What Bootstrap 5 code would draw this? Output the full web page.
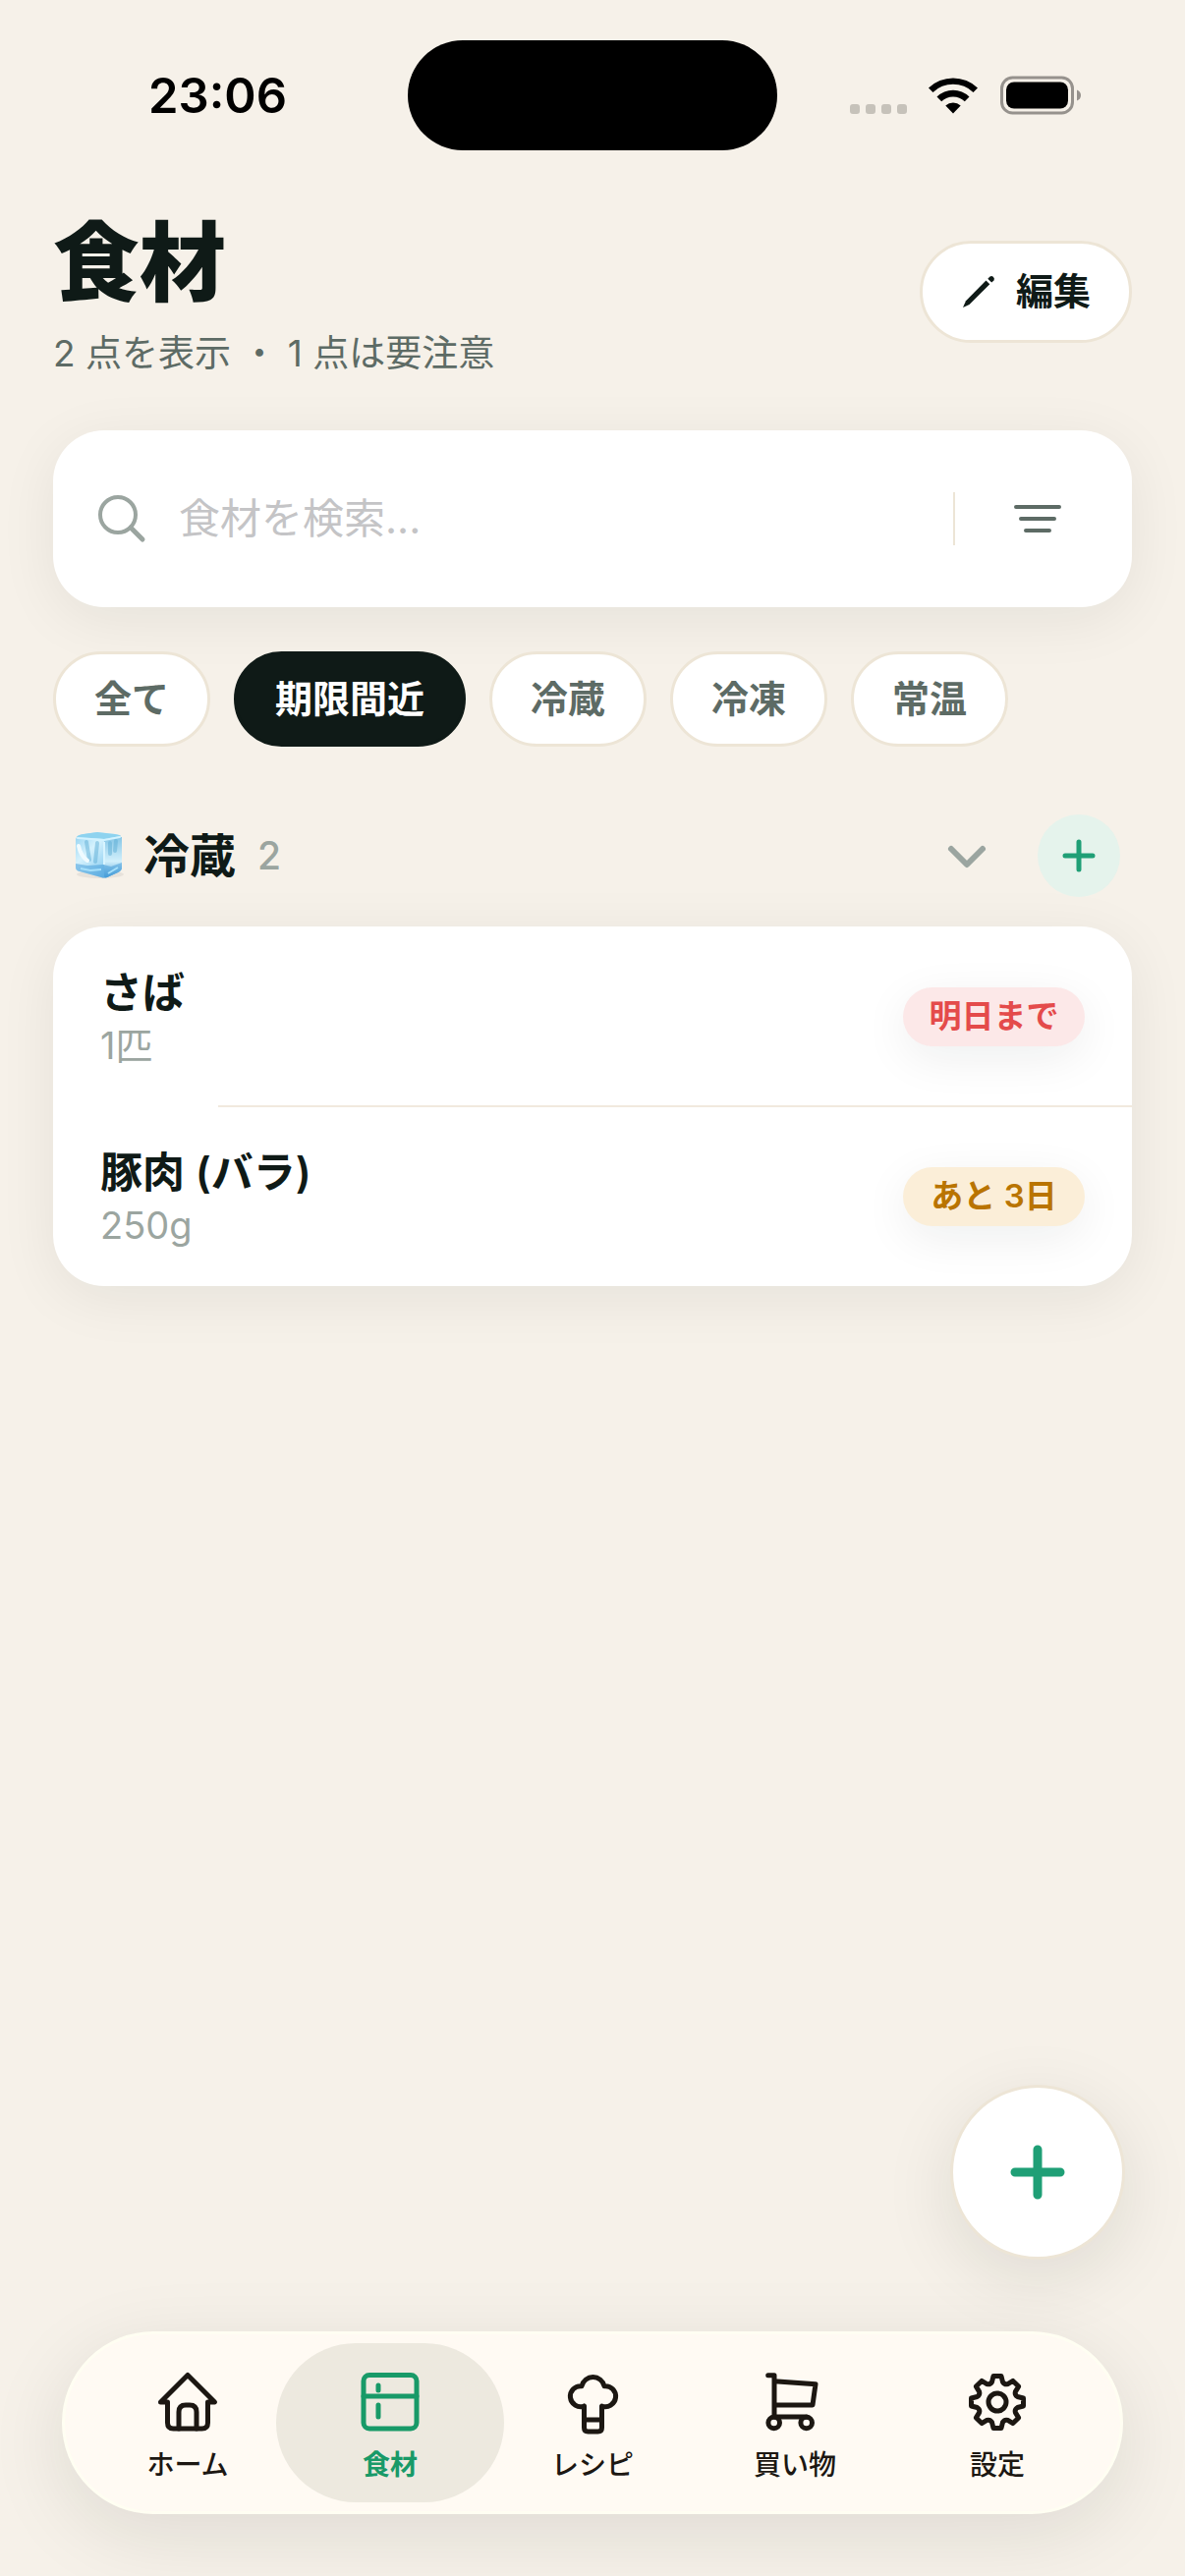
<!DOCTYPE html>
<html lang="ja">
<head>
<meta charset="utf-8">
<meta name="viewport" content="width=device-width, initial-scale=1">
<title>食材</title>
<link href="https://cdn.jsdelivr.net/npm/bootstrap@5.3.0/dist/css/bootstrap.min.css" rel="stylesheet">
<style>
  :root { --ink: #0f1a17; --soft: #5d6b65; --faint: #9ba5a0; --line: #ede5d6; --green: #1f9f76; }
  body { background: #f6f1e9; color: var(--ink); font-family: Inter, "Noto Sans CJK JP", sans-serif; line-height: 1.2; }
  svg { display: block; flex: none; }
  .status { margin-top: 41px; height: 112px; }
  .side { flex: none; width: calc(50% - 188px); }
  .clock { font-size: 49px; font-weight: 600; color: #000; padding-left: 151px; padding-top: 2px; }
  .island { flex: none; width: 376px; background: #000; }
  .tray { padding-right: 105px; }
  .signal { gap: 6px; padding-top: 28px; margin-right: 21px; }
  .signal span { width: 10px; height: 10px; border-radius: 3px; background: #c6c2ba; }
  .battery { margin-left: 22px; }
  .screen { padding: 56px 54px 0; }
  .title { font-size: 88px; font-weight: 800; line-height: 116px; }
  .subtitle { margin-top: 11px; font-size: 37px; line-height: 48px; color: var(--soft); }
  .edit-btn { height: 104px; padding: 0 39px; gap: 20px; background: #fff; border: 3px solid var(--line); font-size: 38px; font-weight: 600; color: var(--ink); }
  .search-box { height: 180px; border-radius: 52px; background: #fff; padding: 0 68px 0 44px; margin-top: 54px; box-shadow: 0 12px 60px rgba(15, 26, 23, .07); }
  .search-box .form-control { margin-left: 32px; font-size: 42px; line-height: 60px; color: var(--ink); }
  .search-box .form-control::placeholder { color: #c4c4c6; opacity: 1; }
  .rule-v { width: 3px; height: 54px; background: var(--line); margin-right: 56px; }
  .chips { gap: 24px; margin-top: 45px; }
  .chip { height: 97px; padding: 0 39px; font-size: 38px; font-weight: 600; background: #fff; color: var(--soft); border: 3px solid var(--line); }
  .chip.active { background: var(--ink); border-color: var(--ink); color: #fff; }
  .group-head { padding: 0 12px 0 21px; margin-top: 69px; height: 84px; }
  .group-name { font-size: 47px; font-weight: 700; margin-left: 19px; }
  .group-count { font-size: 39px; font-weight: 500; color: var(--faint); margin-left: 22px; }
  .add-btn { width: 84px; height: 84px; background: #e5f3ec; margin-left: 50px; }
  .items { margin-top: 30px; border-radius: 52px; background: #fff; box-shadow: 0 12px 60px rgba(15, 26, 23, .07); }
  .items li { height: 183px; padding: 0 48px; }
  .items li + li::before { content: ""; position: absolute; top: -1px; left: 168px; right: 0; height: 2px; background: #f1e9de; }
  .item-name { font-size: 43px; font-weight: 600; line-height: 58px; }
  .item-qty { font-size: 38px; line-height: 50px; color: var(--faint); }
  .due { height: 60px; min-width: 185px; padding: 0 26px; font-size: 33px; font-weight: 600; box-shadow: 0 12px 48px rgba(15, 26, 23, .07); }
  .due-red { background: #fce8e8; color: #e44b4b; }
  .due-amber { background: #fbeed8; color: #b97400; }
  .fab { width: 178px; height: 178px; background: #fff; border: 3px solid var(--line); margin: 0 61px 73px; box-shadow: 0 18px 72px rgba(15, 26, 23, .1); }
  .dock { margin: 0 63px 63px; padding: 9px 22px; border: 3px solid #fffef2; border-radius: 93px; background: #fffaf3; box-shadow: 0 20px 80px rgba(15, 26, 23, .1); }
  .dock .nav-item .nav-link { width: auto; height: 162px; margin: 0 -13px; padding: 28px 0 0; border-radius: 81px; font-size: 28px; font-weight: 500; line-height: 36px; gap: 14px; color: #1c1712; }
  .dock .nav-item .nav-link.active { background: #ede9df; color: #189a68; font-weight: 600; }
  .dock svg { fill: none; stroke: currentColor; stroke-width: 5; stroke-linecap: round; stroke-linejoin: round; }
</style>
<script src="https://cdn.jsdelivr.net/npm/bootstrap@5.3.0/dist/js/bootstrap.bundle.min.js"></script>
</head>
<body class="min-vh-100 d-flex flex-column">
<header class="status d-flex align-items-stretch">
  <div class="side clock d-flex align-items-center">23:06</div>
  <div class="island rounded-pill"></div>
  <div class="side tray d-flex align-items-center justify-content-end">
    <div class="signal d-flex"><span></span><span></span><span></span><span></span></div>
    <svg width="52" height="38" viewBox="0 0 52 38" aria-label="Wi-Fi" role="img">
      <path d="M1 11.500A36 36 0 0 1 51 11.500L46.500 16A29.500 29.500 0 0 0 5.500 16Z"/>
      <path d="M9.500 20.500A23.500 23.500 0 0 1 42.500 20.500L37.800 25.200A17 17 0 0 0 14.200 25.200Z"/>
      <path d="M18.300 29.500A11.500 11.500 0 0 1 33.700 29.500L26 37.500Z"/>
    </svg>
    <svg class="battery" width="83" height="40" viewBox="0 0 83 40" aria-label="バッテリー" role="img">
      <rect x="1.500" y="2" width="72" height="36" rx="11" fill="none" stroke="#96928d" stroke-width="3"/>
      <rect x="6" y="6.500" width="63" height="27" rx="8"/>
      <path d="M78 14.500Q82 16 82 20T78 25.500Z" fill="#96928d"/>
    </svg>
  </div>
</header>

<main class="screen">
  <div class="d-flex align-items-center justify-content-between">
    <div>
      <h1 class="title m-0">食材</h1>
      <p class="subtitle mb-0">2 点を表示 ・ 1 点は要注意</p>
    </div>
    <button type="button" class="edit-btn btn rounded-pill d-flex align-items-center">
      <svg width="36" height="36" viewBox="0 0 36 36" fill="#0f1a17" aria-hidden="true">
        <path d="M25.500 6.500L29.300 10.300L8.500 31L2 34L5 27.200Z"/>
        <path d="M27.300 4.700L29.500 2.500Q31.300 1.200 33 2.900Q34.700 4.700 33.400 6.400L31.200 8.600Z"/>
      </svg>
      編集
    </button>
  </div>

  <form class="search-box d-flex align-items-center" role="search">
    <svg width="52" height="52" viewBox="0 0 52 52" fill="none" stroke="#9ba5a0" stroke-width="4" stroke-linecap="round" aria-hidden="true"><circle cx="22" cy="22" r="18"/><path d="M35 35L47 47" stroke-width="5"/></svg>
    <input type="search" class="form-control border-0 bg-transparent shadow-none p-0" placeholder="食材を検索..." aria-label="食材を検索">
    <span class="rule-v"></span>
    <button type="button" class="btn border-0 p-0" aria-label="絞り込み">
      <svg width="56" height="40" viewBox="0 0 56 40" stroke="#5d6b65" stroke-width="4" stroke-linecap="round" aria-hidden="true"><path d="M6 8H50M11 20H45M16 32H40"/></svg>
    </button>
  </form>

  <div class="chips d-flex">
    <button type="button" class="chip btn rounded-pill">全て</button>
    <button type="button" class="chip btn rounded-pill active">期限間近</button>
    <button type="button" class="chip btn rounded-pill">冷蔵</button>
    <button type="button" class="chip btn rounded-pill">冷凍</button>
    <button type="button" class="chip btn rounded-pill">常温</button>
  </div>

  <section>
    <div class="group-head d-flex align-items-center">
      <svg width="52" height="50" viewBox="0 0 52 50" aria-hidden="true">
        <defs>
          <linearGradient id="iceL" x1="0" y1="0" x2="1" y2="1"><stop offset="0" stop-color="#8fd0f0"/><stop offset=".35" stop-color="#d6f2fd"/><stop offset=".6" stop-color="#a5daf5"/><stop offset="1" stop-color="#4fa6e2"/></linearGradient>
          <linearGradient id="iceR" x1="0" y1="0" x2="0" y2="1"><stop offset="0" stop-color="#86c6e6"/><stop offset=".6" stop-color="#d2f0fc"/><stop offset="1" stop-color="#4c9fd8"/></linearGradient>
        </defs>
        <ellipse cx="27" cy="44" rx="24" ry="4" fill="#000" opacity=".06"/>
        <path d="M2 8Q3 4 10 3L24 1L42 3Q49 4 49 8V37Q49 40 45 42L34 47Q31 48 28 47L6 41Q2 40 2 37Z" fill="url(#iceL)"/>
        <path d="M31 8L49 6V37Q49 40 45 42L34 47Q31 48 31 45Z" fill="url(#iceR)"/>
        <path d="M3 6Q4 4 10 3L24 1L42 3Q48 4 48 5L31 8Z" fill="#8ed3ef"/>
        <path d="M4 7L31 9L47 6" fill="none" stroke="#d3f3ff" stroke-width="2" stroke-linecap="round"/>
        <path d="M13 11L16 29M24 12L22 31M37 12V23M43 10L42 20" stroke="#5fafd6" stroke-width="4" opacity=".5" stroke-linecap="round"/>
        <path d="M5 15Q7 25 14 30" fill="none" stroke="#f0fbff" stroke-width="4" stroke-linecap="round"/>
        <path d="M2 33L14 35L30 34L38 36L49 32V37Q49 40 45 42L34 47Q31 48 28 47L6 41Q2 40 2 37Z" fill="#3f9ad8" opacity=".5"/>
        <path d="M7 38L17 40L28 39M35 43L45 37" fill="none" stroke="#a6e0fb" stroke-width="2"/>
        <path d="M31 11V34" stroke="#d8f4ff" stroke-width="2"/>
      </svg>
      <h2 class="group-name mb-0">冷蔵</h2>
      <span class="group-count">2</span>
      <button type="button" class="btn border-0 p-0 ms-auto" aria-label="折りたたむ">
        <svg width="44" height="32" viewBox="0 0 44 32" fill="none" stroke="#9ba5a0" stroke-width="6" stroke-linecap="round" stroke-linejoin="round" aria-hidden="true"><path d="M6 9L22 25L38 9"/></svg>
      </button>
      <button type="button" class="add-btn btn border-0 rounded-circle p-0 d-flex align-items-center justify-content-center" aria-label="冷蔵に追加">
        <svg width="34" height="34" viewBox="0 0 34 34" stroke="#1f9f76" stroke-width="5" stroke-linecap="round" aria-hidden="true"><path d="M17 3V31M3 17H31"/></svg>
      </button>
    </div>

    <ul class="items list-unstyled mb-0">
      <li class="position-relative d-flex align-items-center justify-content-between">
        <div><div class="item-name">さば</div><div class="item-qty">1匹</div></div>
        <span class="due due-red rounded-pill d-flex align-items-center justify-content-center">明日まで</span>
      </li>
      <li class="position-relative d-flex align-items-center justify-content-between">
        <div><div class="item-name">豚肉 (バラ)</div><div class="item-qty">250g</div></div>
        <span class="due due-amber rounded-pill d-flex align-items-center justify-content-center">あと 3日</span>
      </li>
    </ul>
  </section>
</main>

<footer class="mt-auto d-flex flex-column">
  <button type="button" class="fab btn rounded-circle p-0 align-self-end d-flex align-items-center justify-content-center" aria-label="食材を追加">
    <svg width="56" height="56" viewBox="0 0 56 56" stroke="#1f9f76" stroke-width="9" stroke-linecap="round" aria-hidden="true"><path d="M28 5V51M5 28H51"/></svg>
  </button>
  <nav class="dock nav nav-justified flex-nowrap">
    <div class="nav-item"><a href="#" class="nav-link d-flex flex-column align-items-center">
      <svg width="64" height="64" viewBox="0 0 64 64"><path d="M11.500 32H4.500L32 4.500L59.500 32H52.500V53Q52.500 59 46.500 59H17.500Q11.500 59 11.500 53Z"/><path d="M23 59V42Q23 35 30 35H34Q41 35 41 42V59"/></svg>ホーム</a></div>
    <div class="nav-item"><a href="#" class="nav-link active d-flex flex-column align-items-center" aria-current="page">
      <svg width="64" height="64" viewBox="0 0 64 64"><rect x="5" y="4.500" width="54" height="54.500" rx="6"/><path d="M5 26H59M20 15V20M20 35V47"/></svg>食材</a></div>
    <div class="nav-item"><a href="#" class="nav-link d-flex flex-column align-items-center">
      <svg width="64" height="64" viewBox="0 0 64 64" overflow="visible"><path d="M23.500 36A10.500 10.500 0 1 1 21 15.700A11.800 11.800 0 0 1 44 15.700A10.500 10.500 0 1 1 41.500 36V58Q41.500 62 37.500 62H27.500Q23.500 62 23.500 58V36M23.500 50H41.500"/></svg>レシピ</a></div>
    <div class="nav-item"><a href="#" class="nav-link d-flex flex-column align-items-center">
      <svg width="64" height="64" viewBox="0 0 64 64"><path d="M4.700 4.700H11V47H44M11 10.700L53 13.700L50 35H11"/><circle cx="10.700" cy="53" r="5.800"/><circle cx="43.700" cy="53" r="5.800"/></svg>買い物</a></div>
    <div class="nav-item"><a href="#" class="nav-link d-flex flex-column align-items-center">
      <svg width="64" height="64" viewBox="-32 -32 64 64"><path d="M-5.500-20.500L-4-26.500H4L5.500-20.500Q7.500-17.500 10.600-18.400L15.900-21.600L21.600-15.900L18.400-10.600Q17.500-7.500 20.500-5.500L26.500-4V4L20.500 5.500Q17.500 7.500 18.400 10.600L21.600 15.900L15.900 21.600L10.600 18.400Q7.500 17.500 5.500 20.500L4 26.500H-4L-5.500 20.500Q-7.500 17.500-10.600 18.400L-15.900 21.600L-21.600 15.900L-18.400 10.600Q-17.500 7.500-20.500 5.500L-26.500 4V-4L-20.500-5.500Q-17.500-7.500-18.400-10.600L-21.600-15.900L-15.900-21.600L-10.600-18.400Q-7.500-17.500-5.500-20.500Z"/><circle r="9"/></svg>設定</a></div>
  </nav>
</footer>
</body>
</html>
